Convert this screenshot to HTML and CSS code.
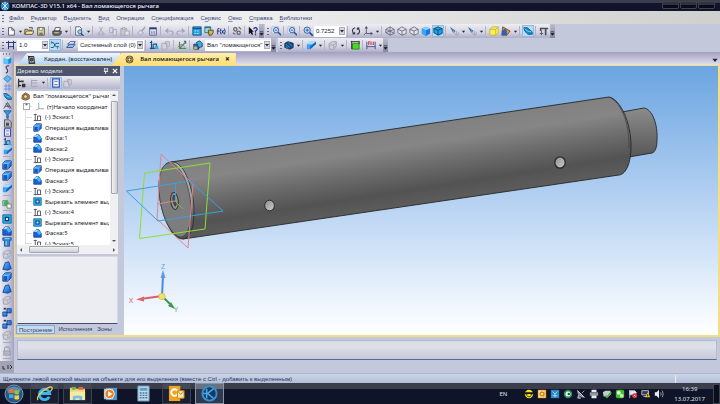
FILE: index.html
```html
<!DOCTYPE html>
<html lang="ru">
<head>
<meta charset="utf-8">
<title>КОМПАС-3D V15.1 x64 - Вал ломающегося рычага</title>
<link rel="stylesheet" href="styles.css">
</head>
<body>
<svg class="defs" aria-hidden="true">
  <defs>
    <linearGradient id="g-blue" x1="0" y1="0" x2="1" y2="1"><stop offset="0" stop-color="#5cc8ff"/><stop offset="1" stop-color="#0a4fd0"/></linearGradient>
    <symbol id="new" viewBox="0 0 12 12"><path d="M3 2h4l3 3v6H3z" fill="#fff" stroke="#444a5c"/><path d="M7 2v3h3" fill="none" stroke="#444a5c"/></symbol>
    <symbol id="open" viewBox="0 0 12 12"><path d="M1 10V4h3l1 1h4v2" fill="#f4d878" stroke="#4a4630"/><path d="M1 10l2-4h9l-2 4z" fill="#ffe89a" stroke="#4a4630"/><path d="M6 2h4v2" fill="none" stroke="#333"/></symbol>
    <symbol id="save" viewBox="0 0 12 12"><path d="M2 2h8v9H2z" fill="#d9d69a" stroke="#4c4c42"/><path d="M4 2h4v3H4z" fill="#fff" stroke="#4c4c42" stroke-width=".6"/><path d="M4 8h4v3H4z" fill="#77705a"/></symbol>
    <symbol id="print" viewBox="0 0 12 12"><path d="M4 2h6l-1 4H3z" fill="#fff" stroke="#444"/><path d="M1 6h10v3l-2 2H2l-1-1z" fill="#6e6e70" stroke="#333"/><path d="M3 8h5" stroke="#e8e27c"/></symbol>
    <symbol id="preview" viewBox="0 0 12 12"><path d="M2 1h5l2 2v8H2z" fill="#fff" stroke="#4a5068"/><circle cx="7" cy="7" r="2.5" fill="#9ed4f4" stroke="#235080"/><path d="M8.500 9l3 3" stroke="#235080" stroke-width="1.500"/></symbol>
    <symbol id="cut" viewBox="0 0 12 12"><path d="M4 1l4 7M8 1L4 8" stroke="#a3a5b5" fill="none"/><circle cx="3.500" cy="9.500" r="1.500" fill="none" stroke="#a3a5b5"/><circle cx="8.500" cy="9.500" r="1.500" fill="none" stroke="#a3a5b5"/></symbol>
    <symbol id="copy" viewBox="0 0 12 12"><path d="M2 2h4v6H2zM6 4h4v7H6z" fill="#dcdce6" stroke="#a3a5b5"/></symbol>
    <symbol id="paste" viewBox="0 0 12 12"><path d="M1 3h7v8H1z" fill="#c6c7d2" stroke="#a0a2b2"/><path d="M3 2h3v2H3zM6 6h5v5H6z" fill="#e4e4ec" stroke="#a0a2b2"/></symbol>
    <symbol id="brush" viewBox="0 0 12 12"><path d="M11 1L7 6" stroke="#9a9cae" stroke-width="1.500"/><path d="M5 5l4 3-4 3-3-2z" fill="#d6d6e0" stroke="#a3a5b5"/></symbol>
    <symbol id="props" viewBox="0 0 12 12"><path d="M2 2h8v9H2z" fill="#e6e8f4" stroke="#4b5684"/><path d="M2 3h8" stroke="#2e3c80" stroke-width="2"/><path d="M4 6v4M6 6v4M8 6v4" stroke="#7883b0"/></symbol>
    <symbol id="undo" viewBox="0 0 12 12"><path d="M2 6h6q3 0 3 3l-2 2" fill="none" stroke="#a3a5b9" stroke-width="1.300"/><path d="M5 2v7L1 6z" fill="#a3a5b9"/></symbol>
    <symbol id="redo" viewBox="0 0 12 12"><path d="M10 6H4Q1 6 1 9l2 2" fill="none" stroke="#a3a5b9" stroke-width="1.300"/><path d="M7 2v7l4-3z" fill="#a3a5b9"/></symbol>
    <symbol id="sheet" viewBox="0 0 12 12"><path d="M1 1h10v10H1z" fill="#2aa5dc" stroke="#114e94"/><path d="M1 3h10" stroke="#114e94" stroke-width="1.500"/><path d="M3 6h6M3 9h6" stroke="#b9ecff" stroke-dasharray="2 1"/></symbol>
    <symbol id="lib" viewBox="0 0 12 12"><path d="M1 1h7v7H1z" fill="#9fe2e6" stroke="#216878"/><path d="M1 2h7" stroke="#114e70"/><path d="M5 5h6v3l-2 3H6z" fill="#d8b648" stroke="#3d3a26"/></symbol>
    <symbol id="vars" viewBox="0 0 12 12"><path d="M4 3Q2 2 2 5v5M1 6h3M6 3q-2 3 0 7M10 3q2 3 0 7M7 5l2 4M9 5L7 9" stroke="#1c2c7c" fill="none" stroke-width="1.100"/></symbol>
    <symbol id="gears" viewBox="0 0 12 12"><circle cx="4" cy="4" r="2" fill="none" stroke="#64616e" stroke-width="1.500"/><circle cx="8" cy="8" r="2" fill="none" stroke="#64616e" stroke-width="1.500"/><path d="M1 8l3 2M8 1l3 3" stroke="#8a6070" stroke-width="1.500"/></symbol>
    <symbol id="help" viewBox="0 0 12 12"><path d="M1 1v9l2-2 2 3 1-1-1-3h2z" fill="#111"/><path d="M7 4q0-2 2-2t2 2q0 1-2 2v2M9 9v2" stroke="#20308c" fill="none" stroke-width="1.500"/></symbol>
    <symbol id="zoom" viewBox="0 0 12 12"><path d="M1 1h8v8H1z" fill="#e8f0ff" stroke="#8a9ac4" stroke-width=".6"/><circle cx="6" cy="5" r="3.200" fill="#c4e2fa" stroke="#2d5290"/><path d="M8.500 7.500L12 11" stroke="#2d5290" stroke-width="1.800"/><path d="M4.500 5h3" stroke="#2d5290"/></symbol>
    <symbol id="zoomin" viewBox="0 0 12 12"><circle cx="5" cy="5" r="3.800" fill="#c4e2fa" stroke="#1e4c9c"/><path d="M8 8l4 4" stroke="#1e4c9c" stroke-width="2"/><path d="M3 5h4M5 3v4" stroke="#1e4c9c"/></symbol>
    <symbol id="rotate" viewBox="0 0 12 12"><path d="M5 2Q1 3 2 7l2 3M7 10q4-1 3-5L8 2" fill="none" stroke="#333846" stroke-width="1.300"/><path d="M1 10h4V7zM7 2h4L7 5z" fill="#333846"/></symbol>
    <symbol id="axes" viewBox="0 0 12 12"><path d="M4 1v8h7M4 8l-3 3" fill="none" stroke="#4a5068"/><path d="M2 3l2-3 2 3zM9 7l3 2-3 2z" fill="#4a5068"/></symbol>
    <symbol id="wire" viewBox="0 0 12 12"><path d="M1 4l5-3 5 3v5L6 11 1 8zM1 4l5 2 5-2M6 6v5M6 1v5M1 8l5-2 5 3" fill="none" stroke="#565a6c" stroke-width=".9"/></symbol>
    <symbol id="cube" viewBox="0 0 12 12"><path d="M1 4l5-3 5 3v5L6 11 1 8zM1 4l5 2 5-2M6 6v5" fill="#e3e4ec" stroke="#565a6c" stroke-width=".9"/></symbol>
    <symbol id="solid" viewBox="0 0 12 12"><path d="M1 3l5-2 5 2v6l-5 3-5-3z" fill="#1878e0"/><path d="M1 3l5-2 5 2-5 2z" fill="#88d4ff"/><path d="M1 3l5 2v7L1 9z" fill="#35a8f8"/></symbol>
    <symbol id="solidedge" viewBox="0 0 12 12"><path d="M1 3l5-2 5 2v6l-5 2-5-3z" fill="#16a8d8" stroke="#123a74"/><path d="M1 3l5 2 5-2M6 5v6" stroke="#123a74" fill="none"/></symbol>
    <symbol id="hide" viewBox="0 0 12 12"><path d="M1 1l7 5-3 2z" fill="#3c6e9c"/><path d="M5 5l3 6M9 6v5h2V7" stroke="#a3a5b5" fill="none"/></symbol>
    <symbol id="ybox" viewBox="0 0 12 12"><path d="M1 4l3-3h7v7l-3 3H1zM1 4h7v7M8 4l3-3" fill="#f7ee5a" stroke="#b9a91e" stroke-width=".8"/></symbol>
    <symbol id="section" viewBox="0 0 12 12"><path d="M2 1l9 5-4 5H1z" fill="#dd9928" stroke="#6d4c30"/><path d="M1 6l4-3 2 3v5H1z" fill="#325eb8"/></symbol>
    <symbol id="persp" viewBox="0 0 12 12"><path d="M1 2l4 0 6 5v3L6 10 2 6z" fill="#1689cf" stroke="#12507e"/><path d="M2 3l3 3 5 1" stroke="#84dcff" fill="none"/></symbol>
    <symbol id="caliper" viewBox="0 0 12 12"><path d="M1 2h10v2H9v7H7V4H3v2H1z" fill="#4c4e5a"/><path d="M3 6v5M1 9h4" stroke="#4c4e5a"/></symbol>
    <symbol id="step" viewBox="0 0 12 12"><path d="M3 1v10M9 1v10M0 3h12M3 8h6" stroke="#2b3a78" fill="none" stroke-width="1.200"/></symbol>
    <symbol id="snap" viewBox="0 0 12 12"><path d="M1 3h3l3 5h4M1 9h3l3-5h4" stroke="#265b94" fill="none" stroke-width="1.200"/><path d="M2 1v4M9 7v4" stroke="#2a8ac8"/></symbol>
    <symbol id="layer" viewBox="0 0 12 12"><path d="M1 8l4-3h6l-3 4H1z" fill="#8ec2ee" stroke="#2c478c"/><path d="M2 5l3-3h6L9 5z" fill="#eef6ff" stroke="#2c478c"/></symbol>
    <symbol id="sketch" viewBox="0 0 12 12"><path d="M3 1v10M1 3h3M1 10h10M5 5h4v5M5 5v5" stroke="#174f96" fill="none" stroke-width="1.400"/><path d="M7 7h4v4H7z" fill="#2eb4dc"/></symbol>
    <symbol id="sketchgray" viewBox="0 0 12 12"><path d="M1 4h6v7H1zM5 2h5v6H7z" fill="#d4d5df" stroke="#a3a5b5"/></symbol>
    <symbol id="rebuild" viewBox="0 0 12 12"><path d="M3 2v8h8M3 10l7-7" stroke="#2f9a53" fill="none" stroke-width="1.300"/><path d="M1 8l5-3 3 3" stroke="#da4560" fill="none"/><path d="M8 1h3v4z" fill="#355a94"/></symbol>
    <symbol id="assembly" viewBox="0 0 12 12"><path d="M1 5h6v6H1z" fill="#2b69cc" stroke="#173463"/><path d="M4 3l4-2 3 3v4L7 9z" fill="#3ab6dc" stroke="#173463"/><path d="M1 8h4v3H1z" fill="#d8b03c"/></symbol>
    <symbol id="extr" viewBox="0 0 12 12"><path d="M1 4l3-3h7v6l-4 4H1z" fill="url(#g-blue)" stroke="#113a86"/><path d="M2 5h5v5H2z" fill="#1b55c0"/><path d="M1 4h6l4-3M7 4v7" fill="none" stroke="#a0e4ff" stroke-width=".7"/></symbol>
    <symbol id="cham" viewBox="0 0 12 12"><path d="M1 4l3-3h4l3 5v5H1z" fill="#1b62d6" stroke="#113a86"/><path d="M1 4l3-3h4L5 4z" fill="#9be4ff"/><path d="M5 4l3-3 3 5-3 2z" fill="#4abaf2"/></symbol>
    <symbol id="slab" viewBox="0 0 12 12"><path d="M1 5l3-3h8L8 5v3l-3 3H1z" fill="#3aa4f4"/><path d="M1 5l3-3h8L8 5z" fill="#a6e0ff"/><path d="M8 5l4-3v3L5 11V8z" fill="#1460c8"/></symbol>
    <symbol id="hole" viewBox="0 0 12 12"><path d="M1 1h10v10H1z" fill="#27bde2" stroke="#10559b"/><path d="M4 4h4v4H4z" fill="#dcf8ff" stroke="#0c2f80" stroke-width="1.400"/></symbol>
    <symbol id="ext" viewBox="0 0 12 12"><path d="M1 3l4-2 6 1v7l-4 2-6-1z" fill="#1c8ae8"/><path d="M1 3l6 1v7l-6-1z" fill="#58c6ff"/><path d="M1 3l4-2 6 1-4 2z" fill="#e2f7ff"/></symbol>
    <symbol id="gextr" viewBox="0 0 12 12"><path d="M1 5l4-3h5v5l-3 4H2z" fill="#cfd0d8" stroke="#9b9dac"/><path d="M2 6h5v4M7 6l3-3" fill="none" stroke="#9b9dac"/></symbol>
    <symbol id="curve" viewBox="0 0 12 12"><path d="M8 1Q2 1 5 5t-1 6" stroke="#343a5c" fill="none" stroke-width="1.500"/></symbol>
    <symbol id="surf" viewBox="0 0 12 12"><path d="M1 6l5-4 5 4-5 5z" fill="#56bdf4" stroke="#2765b0"/></symbol>
    <symbol id="grid" viewBox="0 0 12 12"><path d="M4 1v10M8 1v10M1 4h10M1 8h10" stroke="#5a85d8"/></symbol>
    <symbol id="dim" viewBox="0 0 12 12"><path d="M1 10l5-8 5 8M3 7h6M4 3l5 7" stroke="#4a4e60" fill="none" stroke-width="1.200"/></symbol>
    <symbol id="filter" viewBox="0 0 12 12"><path d="M1 1h10L7 6v5H5V6z" fill="#2e9de6" stroke="#1b4e94"/></symbol>
    <symbol id="bore-op" viewBox="0 0 12 12"><path d="M1 1h10v3H9v7H3V4H1z" fill="#2e8ae0" stroke="#1b4e94"/><path d="M3 2h6M5 5v5" stroke="#b8ecff"/></symbol>
    <symbol id="doc" viewBox="0 0 12 12"><path d="M2 1h6l3 3v7H2z" fill="#b9bac6" stroke="#3c3e48"/><path d="M4 5h4v4H4z" fill="#4b4c58"/></symbol>
    <symbol id="page" viewBox="0 0 12 12"><path d="M2 1h8v10H2z" fill="#f1f4ff" stroke="#3c52a8" stroke-width="1.500"/><path d="M4 4h4M4 8h4" stroke="#3c52a8"/></symbol>
    <symbol id="green" viewBox="0 0 12 12"><path d="M1 2h6v6H1z" fill="#dce3ea" stroke="#65727a"/><circle cx="5" cy="5" r="3" fill="#32ba48"/><path d="M6 6h5v5H6z" fill="#f4f4f4" stroke="#777"/></symbol>
    <symbol id="tri" viewBox="0 0 12 12"><path d="M4 2l4-1 3 8-4 2-6-1z" fill="url(#g-blue)" stroke="#113a86"/></symbol>
    <symbol id="multi" viewBox="0 0 12 12"><path d="M1 6h5v5H1zM6 2h5v5H6z" fill="url(#g-blue)" stroke="#113a86"/><path d="M2 2h3" stroke="#334" stroke-width="2"/></symbol>
    <symbol id="lock" viewBox="0 0 12 12"><path d="M3 6V4q0-3 3-3t3 3v2" fill="none" stroke="#a0a1ae" stroke-width="1.300"/><path d="M2 6h8v5H2z" fill="#b5b6c2" stroke="#999aa8"/></symbol>
    <symbol id="greenbox" viewBox="0 0 12 12"><path d="M3 4h8v7H3z" fill="#48d820" stroke="#348018"/><path d="M2 1v10M1 2h10M11 1v4" stroke="#303448" stroke-width="1.200"/></symbol>
    <symbol id="size" viewBox="0 0 12 12"><path d="M1 2v9M11 2v9M1 8h10" stroke="#2d438c" fill="none"/><path d="M3 6V2h2v4M7 2v4M9 2v4" stroke="#d03848" fill="none"/></symbol>
    <symbol id="hatch" viewBox="0 0 12 12"><path d="M1 4l4-2 6 2v5l-4 2-6-2z" fill="#174a80" stroke="#102848"/><path d="M2 5l5 4M5 3l5 5M2 8l3 2" stroke="#39a4ca"/></symbol>
    <symbol id="tree-sk" viewBox="0 0 12 12"><path d="M3 1v10M1 2h4M1 10h10M6 4h4v6M6 4v6" stroke="#5b5d67" fill="none" stroke-width="1.300"/></symbol>
    <symbol id="part" viewBox="0 0 12 12"><path d="M2 4l4-3 5 3v5l-5 2-5-2z" fill="#b8864a" stroke="#5e4224"/><circle cx="6" cy="6" r="2.500" fill="#f2ddb4" stroke="#5e4224"/></symbol>
    <symbol id="wheel" viewBox="0 0 12 12"><circle cx="6" cy="6" r="4.700" fill="#c9a960" stroke="#473c24"/><circle cx="6" cy="6" r="2" fill="#fff3bc" stroke="#473c24"/><path d="M2 3l3 2M10 3L7 5M2 9l3-2M10 9L7 7" stroke="#473c24"/></symbol>
    <symbol id="drawing" viewBox="0 0 12 12"><path d="M2 2h7l1 9H3z" fill="#a9a9ae" stroke="#29292e" stroke-width="1.300"/><circle cx="6" cy="6" r="2" fill="#555" stroke="#222"/><path d="M1 1l3 3M2 11h9" stroke="#222"/></symbol>
    <symbol id="origin" viewBox="0 0 12 12"><path d="M5 1v8" stroke="#6c8ac8"/><path d="M5 9h7" stroke="#62a06a"/><path d="M5 9l-4 2" stroke="#d07070"/></symbol>
    <symbol id="down" viewBox="0 0 6 6"><path d="M1 2h4L3 4.500z" fill="#222530"/></symbol>
    <symbol id="end" viewBox="0 0 6 12"><path d="M1 7h4M1 9h4l-2 2z" stroke="#16161e" fill="#16161e" stroke-width=".8"/></symbol>
  </defs>
</svg>

<header class="titlebar">
  <svg class="ic app"><circle cx="5" cy="5" r="4.500" fill="#2d86c4"/><path d="M2 2l6 6M8 2L2 8M5 1v8" stroke="#c8ecff"/></svg>
  <h1>КОМПАС-3D V15.1 x64 - Вал ломающегося рычага</h1>
  <div class="winbtns"><button aria-label="Свернуть"></button><button aria-label="Развернуть"></button><button aria-label="Закрыть"></button></div>
</header>

<nav class="menu">
  <i class="grip"></i>
  <a href="#"><u>Ф</u>айл</a><a href="#"><u>Р</u>едактор</a><a href="#">В<u>ы</u>делить</a><a href="#"><u>В</u>ид</a><a href="#">Операции</a><a href="#">С<u>п</u>ецификация</a><a href="#">С<u>е</u>рвис</a><a href="#"><u>О</u>кно</a><a href="#"><u>С</u>правка</a><a href="#"><u>Б</u>иблиотеки</a>
</nav>

<div class="barrow">
  <div class="bar">
    <i class="grip"></i>
    <button class="b" aria-label="Создать"><svg class="ic"><use href="#new"/></svg></button><button class="d" aria-label="Список"><svg><use href="#down"/></svg></button>
    <button class="b" aria-label="Открыть"><svg class="ic"><use href="#open"/></svg></button>
    <button class="b" aria-label="Сохранить"><svg class="ic"><use href="#save"/></svg></button><i class="s"></i>
    <button class="b" aria-label="Печать"><svg class="ic"><use href="#print"/></svg></button><button class="d" aria-label="Список"><svg><use href="#down"/></svg></button><i class="s"></i>
    <button class="b" aria-label="Просмотр"><svg class="ic"><use href="#preview"/></svg></button><button class="d" aria-label="Список"><svg><use href="#down"/></svg></button><i class="s"></i>
    <button class="b" aria-label="Вырезать"><svg class="ic"><use href="#cut"/></svg></button>
    <button class="b" aria-label="Копировать"><svg class="ic"><use href="#copy"/></svg></button>
    <button class="b" aria-label="Вставить"><svg class="ic"><use href="#paste"/></svg></button><i class="s"></i>
    <button class="b" aria-label="Копировать свойства"><svg class="ic"><use href="#brush"/></svg></button>
    <button class="b" aria-label="Свойства"><svg class="ic"><use href="#props"/></svg></button><i class="s"></i>
    <button class="b" aria-label="Отменить"><svg class="ic"><use href="#undo"/></svg></button>
    <button class="b" aria-label="Повторить"><svg class="ic"><use href="#redo"/></svg></button><i class="s"></i>
    <button class="b" aria-label="Менеджер"><svg class="ic"><use href="#sheet"/></svg></button>
    <button class="b" aria-label="Библиотеки"><svg class="ic"><use href="#lib"/></svg></button>
    <button class="b" aria-label="Переменные"><svg class="ic"><use href="#vars"/></svg></button><i class="s"></i>
    <button class="b" aria-label="Параметры"><svg class="ic"><use href="#gears"/></svg></button><i class="s"></i>
    <button class="b" aria-label="Справка"><svg class="ic"><use href="#help"/></svg></button>
    <button class="e" aria-label="Ещё"><svg><use href="#end"/></svg></button>
  </div>
  <div class="bar">
    <i class="grip"></i>
    <button class="b" aria-label="Масштаб рамкой"><svg class="ic"><use href="#zoom"/></svg></button><i class="s"></i>
    <button class="b" aria-label="Показать все"><svg class="ic"><use href="#zoom"/></svg></button><i class="s"></i>
    <button class="b" aria-label="Увеличить"><svg class="ic"><use href="#zoomin"/></svg></button>
    <span class="combo c-small"><select aria-label="Масштаб"><option>0.7252</option></select><svg><use href="#down"/></svg></span><i class="s"></i>
    <button class="b" aria-label="Повернуть"><svg class="ic"><use href="#rotate"/></svg></button>
    <button class="b" aria-label="Ориентация"><svg class="ic"><use href="#axes"/></svg></button><button class="d" aria-label="Список"><svg><use href="#down"/></svg></button><i class="s"></i>
    <button class="b" aria-label="Каркас"><svg class="ic"><use href="#wire"/></svg></button>
    <button class="b" aria-label="Без невидимых линий"><svg class="ic"><use href="#cube"/></svg></button>
    <button class="b" aria-label="Тонкие невидимые линии"><svg class="ic"><use href="#cube"/></svg></button>
    <button class="b" aria-label="Полутоновое"><svg class="ic"><use href="#solid"/></svg></button>
    <button class="b on" aria-label="Полутоновое с каркасом"><svg class="ic"><use href="#solidedge"/></svg></button><i class="s"></i>
    <button class="b" aria-label="Скрыть"><svg class="ic"><use href="#hide"/></svg></button><button class="d" aria-label="Список"><svg><use href="#down"/></svg></button>
    <button class="b" aria-label="Показать"><svg class="ic"><use href="#hide"/></svg></button><button class="d" aria-label="Список"><svg><use href="#down"/></svg></button><i class="s"></i>
    <button class="b" aria-label="Габарит"><svg class="ic"><use href="#ybox"/></svg></button>
    <button class="b" aria-label="Сечение"><svg class="ic"><use href="#section"/></svg></button><button class="d" aria-label="Список"><svg><use href="#down"/></svg></button><i class="s"></i>
    <button class="b on" aria-label="Перспектива"><svg class="ic"><use href="#persp"/></svg></button><i class="s"></i>
    <button class="b" aria-label="Измерения"><svg class="ic"><use href="#caliper"/></svg></button>
    <button class="e" aria-label="Ещё"><svg><use href="#end"/></svg></button>
  </div>
</div>

<div class="barrow second">
  <div class="bar">
    <i class="grip"></i>
    <button class="b" aria-label="Шаг курсора"><svg class="ic"><use href="#step"/></svg></button>
    <span class="combo c-small"><select aria-label="Шаг"><option>1.0</option></select><svg><use href="#down"/></svg></span>
    <button class="b on" aria-label="Привязки"><svg class="ic"><use href="#snap"/></svg></button><i class="s"></i>
    <button class="b" aria-label="Слои"><svg class="ic"><use href="#layer"/></svg></button>
    <span class="combo c-wide"><select aria-label="Слой"><option>Системный слой (0)</option></select><svg><use href="#down"/></svg></span><i class="s"></i>
    <button class="b" aria-label="Эскиз"><svg class="ic"><use href="#sketch"/></svg></button>
    <button class="b" aria-label="Эскиз из библиотеки"><svg class="ic"><use href="#sketchgray"/></svg></button><i class="s"></i>
    <button class="b" aria-label="Перестроить"><svg class="ic"><use href="#rebuild"/></svg></button><i class="s"></i>
    <button class="b" aria-label="Компонент"><svg class="ic"><use href="#assembly"/></svg></button>
    <span class="combo c-wide"><select aria-label="Деталь"><option>Вал "ломающегося"</option></select><svg><use href="#down"/></svg></span>
    <button class="e" aria-label="Ещё"><svg><use href="#end"/></svg></button>
  </div>
  <div class="bar">
    <i class="grip"></i>
    <button class="b" aria-label="Резьба"><svg class="ic"><use href="#hatch"/></svg></button><button class="d" aria-label="Список"><svg><use href="#down"/></svg></button><i class="s"></i>
    <button class="b" aria-label="Поверхность"><svg class="ic"><use href="#slab"/></svg></button><button class="d" aria-label="Список"><svg><use href="#down"/></svg></button><i class="s"></i>
    <button class="b" aria-label="Операция"><svg class="ic"><use href="#gextr"/></svg></button><button class="d" aria-label="Список"><svg><use href="#down"/></svg></button><i class="s"></i>
    <button class="b" aria-label="Листовое тело"><svg class="ic"><use href="#greenbox"/></svg></button><i class="s"></i>
    <button class="b" aria-label="Размеры"><svg class="ic"><use href="#size"/></svg></button><button class="d" aria-label="Список"><svg><use href="#down"/></svg></button>
    <button class="e" aria-label="Ещё"><svg><use href="#end"/></svg></button>
  </div>
</div>

<main class="work">
  <aside class="side">
    <i class="hgrip"></i>
    <div class="group panels">
      <button aria-label="Редактирование детали"><svg class="ic"><use href="#ext"/></svg></button>
      <button aria-label="Кривые"><svg class="ic"><use href="#curve"/></svg></button>
      <button aria-label="Поверхности"><svg class="ic"><use href="#surf"/></svg></button>
      <button aria-label="Массивы"><svg class="ic"><use href="#grid"/></svg></button>
      <button aria-label="Геометрия"><svg class="ic"><use href="#persp"/></svg></button>
      <button aria-label="Измерения"><svg class="ic"><use href="#dim"/></svg></button>
      <button aria-label="Фильтры"><svg class="ic"><use href="#filter"/></svg></button>
      <button aria-label="Спецификация"><svg class="ic"><use href="#doc"/></svg></button>
      <button aria-label="Отчеты"><svg class="ic"><use href="#page"/></svg></button>
      <button aria-label="Оформление"><svg class="ic"><use href="#sketch"/></svg></button>
      <button aria-label="Листовое тело"><svg class="ic"><use href="#slab"/></svg></button>
    </div>
    <i class="h"></i>
    <div class="group tools">
      <button aria-label="Выдавливание"><svg class="ic"><use href="#extr"/></svg></button>
      <button aria-label="Вращение"><svg class="ic"><use href="#extr"/></svg></button>
      <button aria-label="Вычитание"><svg class="ic"><use href="#slab"/></svg></button>
      <i class="h"></i>
      <button aria-label="Булева операция"><svg class="ic"><use href="#green"/></svg></button>
      <i class="h"></i>
      <button aria-label="Вырезать"><svg class="ic"><use href="#hole"/></svg></button>
      <button aria-label="Фаска"><svg class="ic"><use href="#cham"/></svg></button>
      <button aria-label="Отверстие"><svg class="ic"><use href="#bore-op"/></svg></button>
      <button aria-label="Ребро"><svg class="ic"><use href="#gextr"/></svg></button>
      <button aria-label="Уклон"><svg class="ic"><use href="#tri"/></svg></button>
      <button aria-label="Оболочка"><svg class="ic"><use href="#extr"/></svg></button>
      <button aria-label="Сечение"><svg class="ic"><use href="#tri"/></svg></button>
      <button aria-label="Сборка"><svg class="ic"><use href="#gextr"/></svg></button>
      <button aria-label="Массив по сетке"><svg class="ic"><use href="#multi"/></svg></button>
      <button aria-label="Зеркало"><svg class="ic"><use href="#multi"/></svg></button>
      <button aria-label="Копия"><svg class="ic"><use href="#gextr"/></svg></button>
    </div>
    <i class="h"></i>
    <div class="group"><button aria-label="Заблокировать"><svg class="ic"><use href="#lock"/></svg></button></div>
    <i class="h"></i>
    <button class="more" aria-label="Ещё кнопки"><svg viewBox="0 0 12 6"><path d="M2 2v3h2M9 1l2 2-2 2M7 1v4" fill="none" stroke="#30303c"/></svg></button>
  </aside>

  <section class="stage">
    <div class="tabs">
      <button class="tab"><svg class="ic"><use href="#drawing"/></svg><span>Кардан. (восстановлен)</span></button>
      <button class="tab active"><svg class="ic"><use href="#wheel"/></svg><span>Вал ломающегося рычага</span><b>×</b></button>
      <svg class="tabmenu"><use href="#down"/></svg>
    </div>

    <div class="frame">
      <div class="panel">
        <h2><span>Дерево модели</span><svg viewBox="0 0 7 7"><path d="M2 0h3v4M1 4h5M3 4v3M2 0v4" stroke="#fff" fill="none"/></svg><svg viewBox="0 0 7 7"><path d="M1 1l5 5M6 1L1 6" stroke="#fff" stroke-width="1.400"/></svg></h2>
        <div class="ptools">
          <button aria-label="Структура"><svg class="ic" viewBox="0 0 12 12"><path d="M2 1v10M2 4h3M2 9h3" stroke="#222" fill="none" stroke-width="1.300"/><path d="M5 3h3v2H5zM6 7h4v4H6z" fill="#30323c"/></svg></button>
          <button aria-label="Состав"><svg class="ic" viewBox="0 0 12 12"><path d="M3 2v8M3 3h7M3 6h7M3 10h7" stroke="#9a9cb0" fill="none"/></svg></button>
          <button class="d" aria-label="Список"><svg><use href="#down"/></svg></button><i class="s"></i>
          <button class="on" aria-label="Отношения"><svg class="ic"><use href="#page"/></svg></button>
          <button aria-label="Окно"><svg class="ic"><use href="#sketchgray"/></svg></button>
        </div>
        <div class="treebox">
          <ul class="tree">
            <li class="root"><svg class="ic"><use href="#part"/></svg><span>Вал "ломающегося" рычага</span></li>
            <li class="plus"><svg class="ic"><use href="#origin"/></svg><span>(т)Начало координат</span></li>
            <li><svg class="ic"><use href="#tree-sk"/></svg><span>(-) Эскиз:1</span></li>
            <li><svg class="ic"><use href="#extr"/></svg><span>Операция выдавливания:1</span></li>
            <li><svg class="ic"><use href="#cham"/></svg><span>Фаска:1</span></li>
            <li><svg class="ic"><use href="#cham"/></svg><span>Фаска:2</span></li>
            <li><svg class="ic"><use href="#tree-sk"/></svg><span>(-) Эскиз:2</span></li>
            <li><svg class="ic"><use href="#extr"/></svg><span>Операция выдавливания:2</span></li>
            <li><svg class="ic"><use href="#cham"/></svg><span>Фаска:3</span></li>
            <li><svg class="ic"><use href="#tree-sk"/></svg><span>(-) Эскиз:3</span></li>
            <li><svg class="ic"><use href="#hole"/></svg><span>Вырезать элемент выдавливания:1</span></li>
            <li><svg class="ic"><use href="#tree-sk"/></svg><span>(-) Эскиз:4</span></li>
            <li><svg class="ic"><use href="#hole"/></svg><span>Вырезать элемент выдавливания:2</span></li>
            <li><svg class="ic"><use href="#cham"/></svg><span>Фаска:5</span></li>
            <li><svg class="ic"><use href="#tree-sk"/></svg><span>(-) Эскиз:5</span></li>
          </ul>
          <div class="vscroll"><i class="up"></i><i class="thumb"></i><i class="dn"></i></div>
          <div class="hscroll"><i class="lf"></i><i class="thumb"></i><i class="rt"></i></div>
        </div>
        <div class="lower"></div>
        <div class="ptabs"><button class="on">Построение</button><button>Исполнения</button><button>Зоны</button></div>
      </div>

      <div class="view">
        <svg class="model" viewBox="124 66 594 271" preserveAspectRatio="xMinYMin meet">
          <defs>
            <linearGradient id="body" gradientUnits="userSpaceOnUse" x1="390" y1="129" x2="402" y2="207"><stop offset="0" stop-color="#808080"/><stop offset=".25" stop-color="#868686"/><stop offset=".55" stop-color="#696969"/><stop offset=".8" stop-color="#535353"/><stop offset="1" stop-color="#5c5c5c"/></linearGradient>
            <linearGradient id="pin" x1="0" y1="0" x2="0" y2="1"><stop offset="0" stop-color="#8c8c8c"/><stop offset="1" stop-color="#575757"/></linearGradient>
            <linearGradient id="bore" x1="0" y1="0" x2="1" y2="1"><stop offset="0" stop-color="#8c8c8c"/><stop offset="1" stop-color="#cfcfcf"/></linearGradient>
            <linearGradient id="rim" x1="0" y1="0" x2="0" y2="1"><stop offset="0" stop-color="#b4b4b4"/><stop offset=".45" stop-color="#a5a5a5"/><stop offset=".7" stop-color="#626262"/><stop offset="1" stop-color="#505050"/></linearGradient>
          </defs>
          <path d="M622 112L644 108C652 109 658 124 657 140C657 148 655 152 652 153L629 157z" fill="url(#pin)" stroke="#262626" stroke-width=".9"/>
          <path d="M171 162L609 97C620 99 631 122 631 146C631 161 627 174 619 175L183 239z" fill="url(#body)" stroke="#262626" stroke-width=".9"/>
          <path d="M611 98C622 104 630 126 629 148" fill="none" stroke="#333" stroke-width=".6"/>
          <path d="M173 162C185 163 194 190 194 212C194 230 189 239 182 239C170 238 159 210 159 187C159 171 164 161 173 162z" fill="url(#rim)" stroke="#292929" stroke-width=".8"/>
          <path d="M171 163C181 165 190 185 191 208C191 228 187 237 180 237C170 235 159 211 159 187C159 172 163 162 171 163z" fill="#7d7d7d" stroke="#3b3b3b" stroke-width=".7"/>
          <ellipse cx="174.500" cy="201" rx="3.800" ry="8.500" transform="rotate(-6 174.500 201)" fill="#969696" stroke="#333"/>
          <path d="M173 195q-2 5 2 12l2-3q-3-3-2-9z" fill="#454545"/>
          <ellipse cx="269.500" cy="205.500" rx="4.800" ry="5.300" fill="url(#bore)" stroke="#2c2c2c"/>
          <ellipse cx="560" cy="162.500" rx="5.200" ry="5.600" fill="url(#bore)" stroke="#2c2c2c" stroke-width="1.400"/>
          <g fill="none" stroke-width="1">
            <path d="M161 154L193 184L188 248L157 219z" stroke="#dc8790"/>
            <path d="M144.500 173L210 163L205 229L139.500 238.500z" stroke="#8be035"/>
            <path d="M126.500 191L190 181L223 211L158 221z" stroke="#3f9de0"/>
            <path d="M175.500 184v17" stroke="#3f9de0"/><path d="M175 201l-18 3" stroke="#dc8790"/><path d="M175 201l8 8" stroke="#82b83a"/>
          </g>
          <path d="M162 296L163 276" stroke="#4d8be0" stroke-width="2"/><path d="M163 270l2.500 8h-5z" fill="#5d9aea"/>
          <path d="M162 296L144 298.500" stroke="#d9606c" stroke-width="2"/><path d="M136 299.500l8-3v5z" fill="#e0656f"/>
          <path d="M162 296l8 8" stroke="#3a9650" stroke-width="2"/><path d="M175 309l-7-3 3-4z" fill="#3a9650"/>
          <circle cx="162" cy="296.500" r="3.200" fill="#f0e26c" stroke="#c4b43a" stroke-width=".6"/>
          <text x="161" y="269" fill="#6aa0e4">Z</text><text x="129" y="303" fill="#d0606c">X</text><text x="174" y="312" fill="#55b062">Y</text>
        </svg>
      </div>
    </div>

    <div class="prop"></div>
  </section>
</main>

<footer class="status"><span>Щелкните левой кнопкой мыши на объекте для его выделения (вместе с Ctrl - добавить к выделенным)</span><i></i></footer>

<div class="taskbar">
  <button class="start" aria-label="Пуск"><svg viewBox="0 0 20 20"><circle cx="10" cy="10" r="9" fill="#245a88" stroke="#7697ae"/><path d="M3 5q7-5 14 0l-2 4H4z" fill="#86acc4" opacity=".6"/><path d="M5 6q2-2 4.500-.5V9.500Q7 8.500 5 9.500z" fill="#ee7030"/><path d="M10.500 6q2 1 4.500 0v4q-2 1-4.500 0z" fill="#90c83c"/><path d="M5 10.500q2-1 4.500 0v4Q7 13 5 14.500z" fill="#46a8ec"/><path d="M10.500 11q2 1 4.500 0v4q-2 1-4.500 0z" fill="#fcd23c"/></svg></button>
  <button class="task run" aria-label="Internet Explorer"><svg viewBox="0 0 18 18"><path d="M14 12.500A5.500 5.500 0 1 1 14.500 9H5" fill="none" stroke="#3cb4f0" stroke-width="3"/><path d="M2 16Q0 12 8 6t9-3q1 1-2 4" fill="none" stroke="#f0cf50" stroke-width="1.300"/></svg></button>
  <button class="task run" aria-label="Проводник"><svg viewBox="0 0 18 18"><path d="M1 3h6l1 1h9v12H1z" fill="#ecd47c"/><path d="M3 2h4v3H3z" fill="#5eba58"/><path d="M10 2h5v3h-5z" fill="#dc6644"/><path d="M1 7h16v9H1z" fill="#f8e9a4"/><path d="M4 16v-4q5-2 10 0v4h-3v-2H7v2z" fill="#74c2e8"/></svg></button>
  <button class="task" aria-label="Проигрыватель"><svg viewBox="0 0 18 18"><path d="M4 3h12v13H4z" fill="#4f94c8"/><path d="M2 4h10v11H2z" fill="#a5c9df"/><circle cx="8" cy="9.500" r="5" fill="#f07e22" stroke="#fff0d0"/><path d="M6.500 6.500v6L11 9.500z" fill="#fff"/></svg></button>
  <button class="task" aria-label="Калькулятор"><svg viewBox="0 0 18 18"><path d="M3 1h12v16H3z" fill="#c0d9ea" stroke="#608cac"/><path d="M5 3h8v3H5z" fill="#5c9cd0"/><path d="M5 8.500h8M5 11h8M5 13.500h8" stroke="#4f7795" stroke-dasharray="2 1" stroke-width="1.500"/></svg></button>
  <button class="task run" aria-label="Outlook"><svg viewBox="0 0 18 18"><path d="M1 1h12v16H1z" fill="#f3a31c"/><circle cx="7" cy="8" r="3.500" fill="none" stroke="#fff" stroke-width="2"/><path d="M10 6h7v8h-7z" fill="#fbe7ae" stroke="#c88618"/><path d="M10 6l3.500 4L17 6" fill="none" stroke="#c88618"/></svg></button>
  <button class="task run cur" aria-label="КОМПАС-3D"><svg viewBox="0 0 18 18"><circle cx="9" cy="9" r="7.500" fill="#153a62" stroke="#3a8fd0" stroke-width="2"/><path d="M6 4v10M13 4L7 9l6 5M2 9h5" fill="none" stroke="#4aa5e4" stroke-width="1.700"/></svg></button>
  <span class="gap"></span>
  <span class="lang">EN</span>
  <div class="tray">
    <svg viewBox="0 0 12 12"><circle cx="6" cy="6" r="5" fill="#f4df26"/><path d="M1 4h10v2l-2 1-2-1H5L3 7 1 6z" fill="#17171c"/><path d="M3 8q3 3 6 0" stroke="#222" fill="none"/></svg>
    <svg viewBox="0 0 12 12"><path d="M1 1h10v10H1z" fill="#f0b040"/><path d="M2 2h7v8H2z" fill="#fbe3a4"/><circle cx="6" cy="6" r="2.300" fill="none" stroke="#d07c10" stroke-width="1.500"/></svg>
    <svg viewBox="0 0 12 12"><path d="M1 1h10v10H1z" fill="#2a88c8"/><path d="M3 3l3 3 3-3M6 6v4M3 8h6" stroke="#b5e6ff" fill="none"/></svg>
    <svg viewBox="0 0 12 12"><circle cx="6" cy="6" r="5" fill="#2c9460"/><circle cx="6" cy="6" r="3" fill="#f0fff2"/><circle cx="7" cy="6" r="1.500" fill="#146038"/></svg>
    <svg viewBox="0 0 12 12"><path d="M2 2q0 7 8 8zM2 2l8 8M7 5l3-3M3 7l-1 4h4" fill="#84888e" stroke="#d4d6da" stroke-width=".8"/></svg>
    <svg viewBox="0 0 12 12"><path d="M3 1h6v3H3zM3 7h6v4H3z" fill="#e9e9ee"/><path d="M1 4h10v4H1z" fill="#9493a4"/></svg>
    <svg viewBox="0 0 12 12"><path d="M1 4l3-2h6l1 4-3 3H2z" fill="#c9cbca"/><path d="M4 8l2 2 5-6" stroke="#44b83c" stroke-width="2" fill="none"/></svg>
    <svg viewBox="0 0 12 12"><rect x="1" y="1" width="10" height="10" rx="2" fill="#37c22c"/><circle cx="4.500" cy="4.500" r="2.300" fill="#efffe8"/><circle cx="8" cy="8" r="2.300" fill="#c8f4a4"/></svg>
    <svg viewBox="0 0 12 12"><path d="M2 1v10M2 2h6l2 2-1 3H2z" fill="#e7e7ee" stroke="#c4c4d0"/><circle cx="8" cy="8" r="3" fill="#dc2d3b"/><path d="M7 7l2 2M9 7L7 9" stroke="#fff" stroke-width=".8"/></svg>
    <svg viewBox="0 0 12 12"><path d="M1 2h8v5H1zM3 9h4" fill="#343a4e" stroke="#d0d3dc"/><path d="M8 4l3 6H5z" fill="#f4cc2a"/><path d="M8 6v3" stroke="#222"/></svg>
    <svg viewBox="0 0 12 12"><path d="M1 4h2l3-3v10L3 8H1z" fill="#e9edf4"/><path d="M8 4q1 2 0 4M10 2q2 4 0 8" stroke="#a9adb8" fill="none"/></svg>
  </div>
  <time class="clock"><span>16:39</span><span>13.07.2017</span></time>
  <button class="desk" aria-label="Свернуть все окна"></button>
</div>
</body>
</html>
```

FILE: styles.css
```css
* { box-sizing: border-box; }

html, body { height: 100%; }

body {
  margin: 0;
  display: flex;
  flex-direction: column;
  overflow: hidden;
  background: #c3c9db;
  color: #22252e;
  font: 6px/10px "Noto Sans", "Open Sans", sans-serif;
}

button {
  margin: 0;
  padding: 0;
  border: 0;
  background: none;
  color: inherit;
  font: inherit;
}

a { color: inherit; text-decoration: none; }
svg { display: block; }
.defs { position: absolute; width: 0; height: 0; }
.ic { width: 10px; height: 10px; flex: none; }

/* Classic dialog typeface for menus, lists and hints */
.menu, .combo, .ptabs, .status { font-family: "Liberation Sans", Arial, sans-serif; }

/* Title bar and menu */
.titlebar {
  display: flex;
  align-items: center;
  height: 11px;
  flex: none;
  gap: 2px;
  background: linear-gradient(#3b3c4c 0 3px, #11142a 3px);
}
.titlebar h1 { margin: 0; flex: 1; color: #f2f3f8; font-size: 6px; font-weight: 500; line-height: 10px; }
.winbtns { display: flex; gap: 1px; align-self: flex-start; padding: 1px 5px 0 0; }
.winbtns button {
  width: 17px;
  height: 8px;
  border: 1px solid #3f424f;
  border-radius: 0 0 2px 2px;
  background: linear-gradient(#30323f 50%, #090b17 50%);
}

.menu {
  display: flex;
  align-items: center;
  flex: none;
  height: 13px;
  gap: 7px;
  color: #3c4577;
  background: linear-gradient(90deg, #e9e9ee, #eeeeef 35%, #cfcfd0);
}
.menu .grip { margin-right: -3px; }
.menu u { text-underline-offset: 1px; text-decoration-thickness: 1px; text-decoration-color: #8a90b4; }

.grip {
  width: 5px;
  height: 8px;
  flex: none;
  background: radial-gradient(circle, #62658a 40%, transparent 50%) 2px 0 / 2px 3px repeat-y;
}

/* Toolbars */
.barrow { display: flex; gap: 1px; height: 14px; flex: none; }
.barrow.second { gap: 2px; }
.bar {
  display: flex;
  align-items: center;
  height: 14px;
  background: linear-gradient(#ededf4, #d3d3e1 60%, #aeaec9);
}
.b { width: 12px; height: 12px; display: grid; place-items: center; }
.b.on, .ptools .on { background: #b9dcf6; outline: 1px solid #8fbbe0; outline-offset: -1px; }
.d { width: 6px; height: 12px; display: grid; place-items: center; }
.d svg { width: 5px; height: 5px; }
.s { width: 1px; height: 10px; margin: 0 2px 0 1px; background: #b2b2c6; }
.e { width: 5px; height: 14px; background: linear-gradient(#bdbdd0, #85859f); }
.e svg { width: 5px; height: 12px; }
.combo { display: flex; align-items: center; height: 11px; background: #fff; }
.combo select {
  appearance: none;
  flex: 1;
  min-width: 0;
  height: 11px;
  padding: 0 0 0 2px;
  border: 0;
  background: none;
  color: #22252e;
  font: inherit;
}
.combo svg { width: 6px; height: 8px; margin-right: 1px; background: #d9d9e3; outline: 1px solid #aaaabb; outline-offset: -1px; }
.c-small { width: 32px; }
.c-wide { width: 66px; margin-left: 1px; }

/* Work area */
.work { flex: 1; min-height: 0; display: grid; grid-template-columns: 14px 1fr; }

.side {
  display: flex;
  flex-direction: column;
  min-height: 0;
  background: linear-gradient(90deg, #e9e9f2, #c9c9db 60%, #a3a3c1);
}
.side button { display: grid; place-items: center; min-height: 0; }
.hgrip { height: 4px; margin: 0 2px; background: radial-gradient(circle, #8083a0 40%, transparent 50%) 0 1px / 3px 2px repeat-x; }
.group { display: flex; flex-direction: column; }
.panels button { height: 9px; }
.panels .ic { width: 9px; height: 9px; }
.tools { flex: 1; min-height: 0; }
.tools button { flex: 1; }
.h { height: 1px; margin: 1px 3px 2px; flex: none; background: #a9a9be; }
.group:not(.panels):not(.tools) button { height: 12px; }
.side .more { height: 12px; background: #a3a3b6; }
.more svg { width: 12px; height: 6px; }

.stage { display: flex; flex-direction: column; min-width: 0; min-height: 0; }

.tabs {
  display: flex;
  align-items: flex-end;
  flex: none;
  height: 13px;
  padding-left: 4px;
  background: linear-gradient(#a2a0c0, #e1e0ec);
}
.tab {
  display: flex;
  align-items: center;
  gap: 8px;
  height: 12px;
  padding: 0 8px 0 9px;
  background: linear-gradient(#edf5fd, #b3d3f2);
  clip-path: polygon(9px 0, 100% 0, 100% 100%, 0 100%);
}
.tab .ic { width: 9px; height: 9px; }
.tab.active {
  gap: 6px;
  margin-left: -8px;
  padding: 0 6px 0 13px;
  background: linear-gradient(#ffeeaa, #ffdf74);
  font-weight: 600;
}
.tab b { font-size: 8px; }
.tabmenu { width: 8px; height: 8px; margin: 0 1px 1px auto; }

.frame {
  flex: 1;
  min-height: 0;
  display: grid;
  grid-template-columns: 109px 1fr;
  border: 1px solid #f4dd86;
  border-right-width: 2px;
  border-bottom-width: 2px;
}

/* Model tree */
.panel { display: flex; flex-direction: column; min-height: 0; min-width: 0; padding: 0 4px 1px 1px; background: #c3c9db; }
.panel h2 {
  display: flex;
  align-items: center;
  gap: 3px;
  height: 10px;
  margin: 0;
  padding: 0 2px 0 1px;
  background: #4d546c;
  color: #e4e7f2;
  font-size: 6px;
  font-weight: 400;
}
.panel h2 span { flex: 1; }
.panel h2 svg { width: 6px; height: 6px; }
.ptools {
  display: flex;
  align-items: center;
  height: 13px;
  margin-bottom: 2px;
  background: linear-gradient(#ececf3, #b5b5cc);
}
.ptools button { height: 12px; width: 12px; display: grid; place-items: center; }
.ptools .d { width: 6px; }
.treebox {
  display: grid;
  grid-template: 154px 9px / 1fr 8px;
  margin: 0 2px 0 1px;
  background: #fff;
  overflow: hidden;
}
.tree {
  display: grid;
  grid-template-rows: repeat(15, 1fr);
  height: 158px;
  margin: 0;
  padding: 0 1px 0 4px;
  list-style: none;
  overflow: hidden;
  white-space: nowrap;
}
.tree li { display: flex; align-items: center; gap: 3px; min-width: 0; padding-left: 12px; overflow: hidden; }
.tree li.root { padding-left: 0; }
.tree li:not(.root) {
  background: linear-gradient(#d8d8de, #d8d8de) 5px 50% / 6px 1px no-repeat, linear-gradient(#e0e0e6, #e0e0e6) 4px 0 / 1px 100% no-repeat;
}
.tree li.plus::before {
  content: "+";
  flex: none;
  width: 5px;
  height: 5px;
  margin: 0 2px 0 -10px;
  border: 1px solid #a6a9b4;
  background: #fff;
  font-size: 5px;
  line-height: 3px;
  text-align: center;
}
.tree .ic { width: 9px; height: 9px; }

.vscroll, .hscroll { display: flex; align-items: center; background: #f0f0f3; }
.vscroll { flex-direction: column; grid-area: 1 / 2; }
.hscroll { grid-area: 2 / 1 / 3 / 3; z-index: 1; }
.vscroll .thumb { width: 7px; height: 93px; margin: 2px 0 auto; border: 1px solid #a3a6ae; border-radius: 1px; background: linear-gradient(90deg, #f3f3f4, #cdced3); }
.hscroll .thumb { width: 50px; height: 7px; margin: 0 auto 0 4px; border: 1px solid #a3a6ae; border-radius: 1px; background: linear-gradient(#f3f3f4, #cdced3); }
.up, .dn, .lf, .rt { border: 2px solid transparent; margin: 3px; }
.up { border-bottom-color: #555; border-top: 0; }
.dn { border-top-color: #555; border-bottom: 0; }
.lf { border-right-color: #555; border-left: 0; }
.rt { border-left-color: #555; border-right: 0; }

.lower { flex: 1; margin: 2px 2px 0 1px; border: 1px solid #d7dae4; border-bottom: 1px solid #464d6c; background: #ebedf2; }
.ptabs { display: flex; align-items: center; gap: 1px; height: 10px; color: #2f3a68; }
.ptabs button { height: 9px; line-height: 8px; padding: 0 2px; white-space: nowrap; }
.ptabs .on { border: 1px solid #84a6cc; background: #c6dbf0; }

/* Drawing area */
.view {
  min-width: 0;
  min-height: 0;
  overflow: hidden;
  background: linear-gradient(#6ba5e1, #a9caef 42%, #d3e4f8 70%, #fdfeff 98%);
}
.model { width: 100%; }
.model text { font: 7px "Noto Sans", sans-serif; }

.prop {
  height: 20px;
  flex: none;
  margin: 3px 3px 13px 3px;
  border: 1px solid #b3bccf;
  border-bottom-color: #55699b;
  background: linear-gradient(#d8dbe6, #e0e0ea 30%, #c8c9d9);
}

.status {
  display: flex;
  align-items: center;
  flex: none;
  height: 10px;
  padding-left: 3px;
  color: #28366c;
  background: linear-gradient(#ccd4e6, #b3bfd8);
  border-top: 1px solid #afb7c9;
}
.status span { flex: 1; white-space: nowrap; }
.status i { width: 45px; height: 8px; border-left: 1px solid #e8ecf5; }

/* Taskbar */
.taskbar {
  display: flex;
  align-items: center;
  flex: none;
  height: 21px;
  color: #dfe1ea;
  background: linear-gradient(#3b3d4a 0 6px, #101428 6px);
}
.start { width: 28px; padding-left: 4px; margin-right: 2px; }
.start svg { width: 20px; height: 20px; }
.task { width: 29px; height: 21px; margin-right: 4px; display: grid; place-items: center; border: 1px solid transparent; }
.task svg { width: 17px; height: 17px; }
.task.run { border-color: #3c414f; background: linear-gradient(#454955 0 5px, #1b2031 5px); }
.task.cur { border-color: #8b93a1; background: linear-gradient(#6a7180 0 5px, #2e3a50 5px); }
.gap { flex: 1; }
.lang { margin-right: 17px; }
.tray { display: flex; gap: 3px; margin-right: 10px; }
.tray svg { width: 10px; height: 10px; }
.clock { display: flex; flex-direction: column; align-items: center; margin-right: 8px; }
.desk { width: 7px; height: 20px; border: 1px solid #40444f; background: #0a0d1c; }
```
